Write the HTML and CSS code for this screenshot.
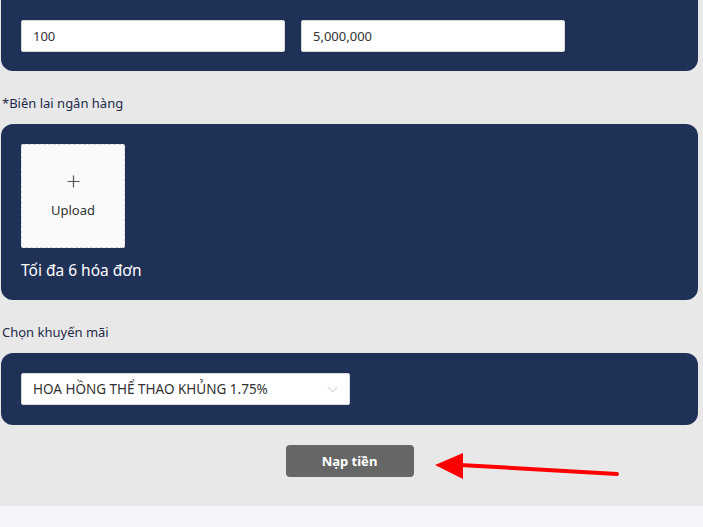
FILE: index.html
```html
<!DOCTYPE html>
<html lang="vi">
<head>
    <meta charset="UTF-8">
    <meta name="viewport" content="width=device-width, initial-scale=1.0">
    <title>Nạp tiền</title>
    <link rel="stylesheet" href="styles.css">
</head>
<body>
    <main class="page">
        <section class="card card-top">
            <div class="row">
                <input class="field" type="text" value="100">
                <input class="field" type="text" value="5,000,000">
            </div>
        </section>

        <p class="label">*Biên lai ngân hàng</p>
        <section class="card card-upload">
            <div class="upload">
                <svg class="upload-plus" width="13" height="13" viewBox="0 0 13 13">
                    <path d="M6.5 0.5 V12.5 M0.5 6.5 H12.5" stroke="#555" stroke-width="1.2"/>
                </svg>
                <span class="upload-text">Upload</span>
            </div>
            <p class="upload-note">Tối đa 6 hóa đơn</p>
        </section>

        <p class="label">Chọn khuyến mãi</p>
        <section class="card card-select">
            <div class="select">
                <span>HOA HỒNG THỂ THAO KHỦNG 1.75%</span>
                <svg class="chevron" width="11" height="7" viewBox="0 0 11 7">
                    <path d="M0.5 0.8 L5.5 5.8 L10.5 0.8" fill="none" stroke="#c4c4c4" stroke-width="1"/>
                </svg>
            </div>
        </section>

        <div class="actions">
            <button class="btn-submit" type="button">Nạp tiền</button>
            <svg class="arrow" width="200" height="34" viewBox="0 0 200 34">
                <line x1="25" y1="12" x2="182" y2="21" stroke="#ff0000" stroke-width="4" stroke-linecap="round"/>
                <polygon points="0,12 28,0 28,26" fill="#ff0000"/>
            </svg>
        </div>
    </main>
    <footer class="footer"></footer>
</body>
</html>
```

FILE: styles.css
```css
body {
    font-family: "Noto Sans", "Open Sans", sans-serif;
    margin: 0;
    padding: 0;
    background-color: #f4f5f9;
    color: #333;
}
.page {
    background-color: #e8e8e8;
    padding: 0 5px 29px 1px;
}
.card {
    background-color: #1f3157;
    border-radius: 12px;
    padding: 20px;
}
.card-top {
    border-radius: 0 0 12px 12px;
    padding-bottom: 19px;
}
.row {
    display: flex;
    gap: 16px;
}
.field {
    display: block;
    width: 264px;
    height: 32px;
    box-sizing: border-box;
    border: 1px solid #d9d9d9;
    border-radius: 2px;
    padding: 0 11px;
    font-family: inherit;
    font-size: 13px;
    color: #333;
    background: white;
}
.label {
    margin: 0;
    padding: 23px 0 12px 1px;
    font-size: 13px;
    line-height: 18px;
    color: #1e2a4a;
}
.upload {
    width: 104px;
    height: 104px;
    box-sizing: border-box;
    background-color: #fafafa;
    border: 1px dashed #d9d9d9;
    border-radius: 2px;
    display: flex;
    flex-direction: column;
    align-items: center;
    justify-content: center;
    gap: 14px;
}
.upload-plus {
    display: block;
}
.upload-text {
    font-size: 13px;
    line-height: 16px;
    color: #333;
}
.upload-note {
    margin: 12px 0 0 0;
    font-size: 15.5px;
    line-height: 20px;
    color: white;
}
.select {
    width: 329px;
    height: 32px;
    box-sizing: border-box;
    background: white;
    border: 1px solid #d9d9d9;
    border-radius: 2px;
    padding: 0 11px 0 11px;
    display: flex;
    align-items: center;
    justify-content: space-between;
    font-size: 13.5px;
    color: #333;
}
.actions {
    position: relative;
    display: flex;
    justify-content: center;
    padding-top: 20px;
}
.btn-submit {
    display: block;
    width: 128px;
    height: 32px;
    border: none;
    border-radius: 4px;
    background-color: #666;
    color: white;
    font-family: inherit;
    font-size: 13px;
    font-weight: bold;
}
.arrow {
    position: absolute;
    left: 434px;
    top: 28px;
}
.footer {
    height: 20px;
}
```
